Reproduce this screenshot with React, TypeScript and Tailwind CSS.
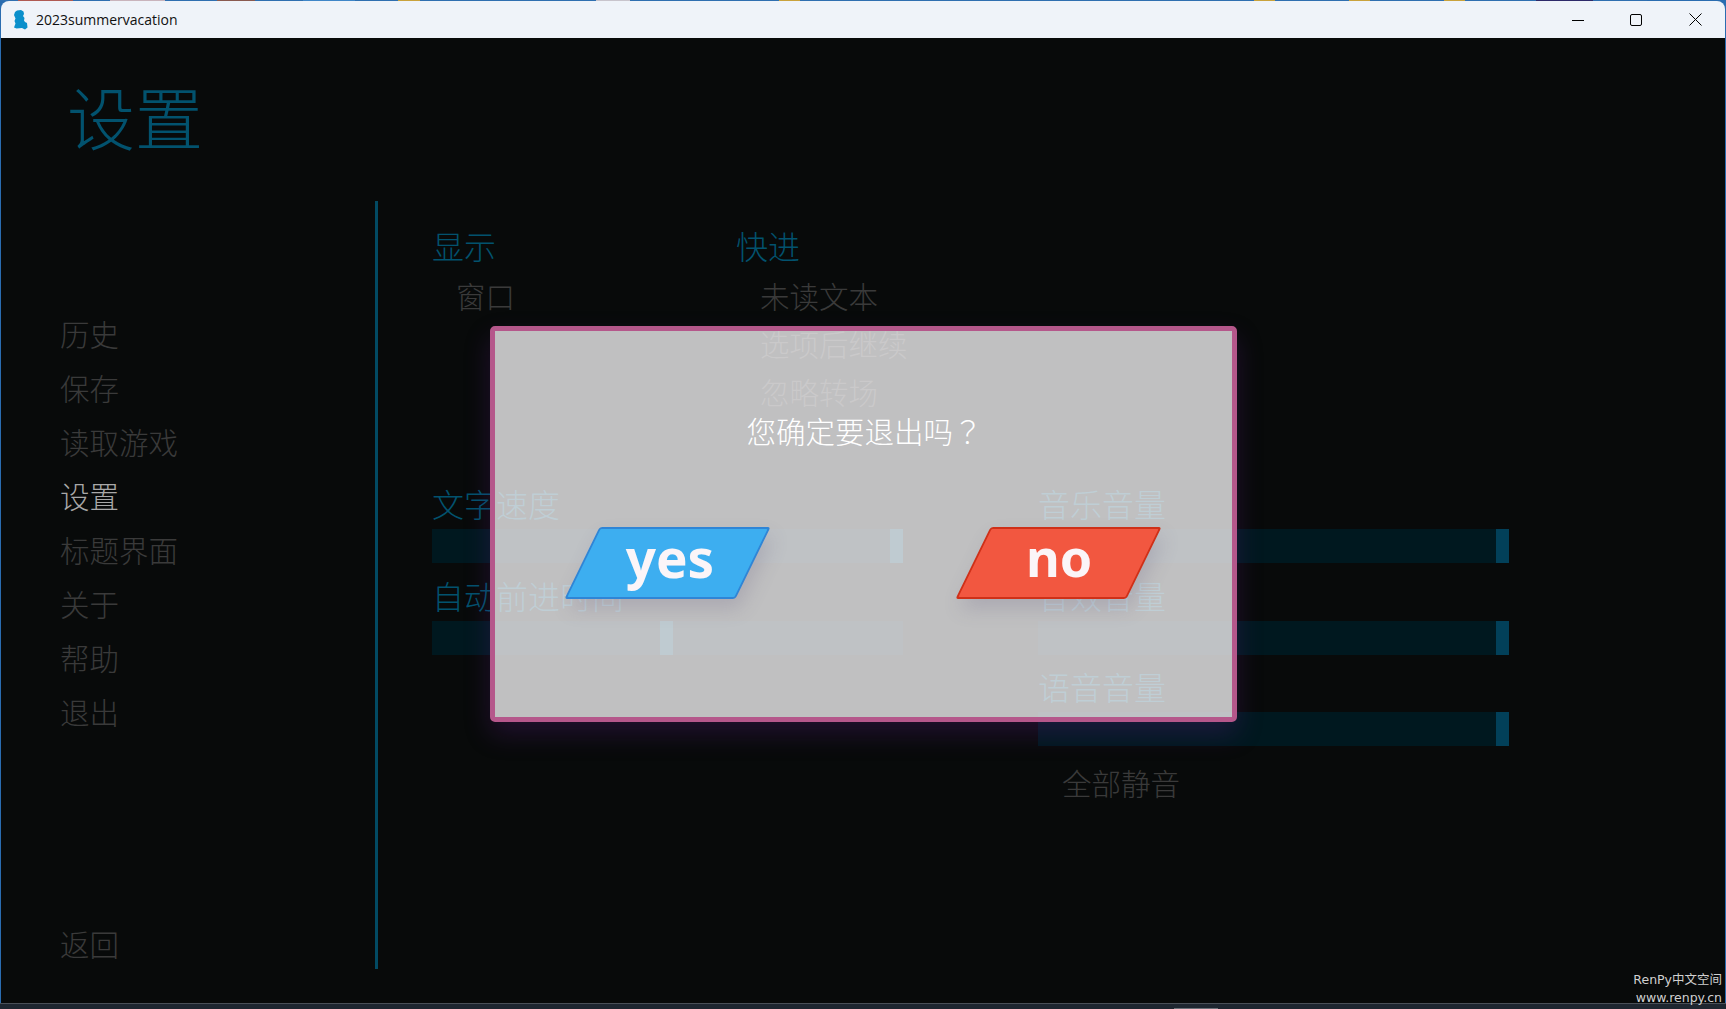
const cjk = "font-['Noto_Sans_CJK_SC','Noto_Sans',sans-serif]";

const navItems = ["历史", "保存", "读取游戏", "设置", "标题界面", "关于", "帮助", "退出"];

// wallpaper peeking out above the window
const wallpaper = [
  "w-[18px] bg-[#2f6fb0]", "w-[55px] bg-[#b05a52]", "w-[37px] bg-[#2f6fb0]", "w-[55px] bg-[#c9b4bc]",
  "w-[52px] bg-[#2f6fb0]", "w-[38px] bg-[#8a5a50]", "w-[48px] bg-[#2f6fb0]", "w-[52px] bg-[#3f86c8]",
  "w-[43px] bg-[#2f6fb0]", "w-[22px] bg-[#c9a23c]", "w-[176px] bg-[#2f6fb0]", "w-[34px] bg-[#c8c4cc]",
  "w-[149px] bg-[#2f6fb0]", "w-[21px] bg-[#c9a23c]", "w-[454px] bg-[#2f6fb0]", "w-[21px] bg-[#c9a23c]",
  "w-[74px] bg-[#2f6fb0]", "w-[21px] bg-[#c9a23c]", "w-[74px] bg-[#2f6fb0]", "w-[21px] bg-[#c9a23c]",
  "w-[71px] bg-[#2f6fb0]", "w-[57px] bg-[#2e2a6a]", "w-[54px] bg-[#2f6fb0]",
];

function Slider({ label, thumb, className = "" }: { label: string; thumb: string; className?: string }) {
  return (
    <div className={`mb-4 w-[471px] ${className}`}>
      <div className="mb-[10px] h-8 text-[32px] leading-8 text-[#02526e]">{label}</div>
      <div className="flex h-[34px] bg-[#00181f]">
        <div className={`h-full w-[13px] bg-[#024059] ${thumb}`} />
      </div>
    </div>
  );
}

function Options({ title, items }: { title: string; items: string[] }) {
  return (
    <div>
      <div className="h-8 text-[32px] leading-8 text-[#02526e]">{title}</div>
      <div className="mt-[10px] pl-6">
        {items.map((item) => (
          <div key={item} className="h-12 text-[29.5px] leading-[48px] text-[#3a3a3a]">{item}</div>
        ))}
      </div>
    </div>
  );
}

function TitleBar() {
  return (
    <div className="flex h-[37px] items-center rounded-t-lg bg-[#eff3f9] pl-[12px]">
      <svg width="15" height="20" viewBox="0 0 15 20" className="shrink-0">
        <path d="M4 0.5 L8 0 L10.5 1.5 L11 4 L10 6 L11.5 8 L11 10.5 L12 12 L14 13 L14.5 17.5 L12 19.5 L9 18 L3.5 18.5 L1 17.5 L2.5 13.5 L1.5 11 L2.5 8.5 L1 5 L2 2 Z" fill="#0a8fcb" />
      </svg>
      <span className="ml-2 font-['Open_Sans',sans-serif] text-[14px] font-normal text-[#111]">2023summervacation</span>
      <div className="ml-auto flex h-full items-center text-black">
        <svg width="12" height="12" viewBox="0 0 12 12" className="mr-[46px]">
          <path d="M0 6.5H12" stroke="currentColor" strokeWidth="1" />
        </svg>
        <svg width="12" height="12" viewBox="0 0 12 12" className="mr-[47px]">
          <rect x="0.5" y="0.5" width="11" height="11" rx="1.5" fill="none" stroke="currentColor" strokeWidth="1" />
        </svg>
        <svg width="13" height="13" viewBox="0 0 13 13" className="mr-[23px]">
          <path d="M0.5 0.5L12.5 12.5M12.5 0.5L0.5 12.5" stroke="currentColor" strokeWidth="1" />
        </svg>
      </div>
    </div>
  );
}

function QuitDialog() {
  return (
    <div className="absolute left-[489px] top-[288px] h-[396px] w-[747px] rounded-[5px] border-[5px] border-[#b5578b] bg-[rgba(239,238,239,0.8)] shadow-[0_12px_26px_rgba(90,30,130,0.3)]">
      <div className="pt-[79px] pl-[2px] text-center text-[29.5px] leading-10 text-white">
        您确定要退出吗<span className="font-['Noto_Sans_CJK_TC',sans-serif]">？</span>
      </div>
      <div className="mt-[77px] flex gap-[220px] pl-[87px]">
        <div className="flex h-[72px] w-[171px] -skew-x-[26deg] items-center justify-center rounded-[3px] border-2 border-[#2f85d6] bg-[#3daef0] pb-3 shadow-[8px_10px_18px_rgba(90,80,120,0.2)]">
          <span className="skew-x-[26deg] font-['Noto_Sans',sans-serif] text-[53px] leading-none font-bold text-[#fbf5f8]">yes</span>
        </div>
        <div className="flex h-[72px] w-[171px] -skew-x-[26deg] items-center justify-center rounded-[3px] border-2 border-[#cf3018] bg-[#f25740] pb-3 shadow-[8px_10px_18px_rgba(90,80,120,0.2)]">
          <span className="mr-[5px] skew-x-[26deg] font-['Noto_Sans',sans-serif] text-[52px] leading-none font-bold text-[#fbf5f8]">no</span>
        </div>
      </div>
    </div>
  );
}

export default function App() {
  return (
    <div className={`flex h-[1009px] w-[1726px] flex-col overflow-hidden bg-[#2a6cb0] font-light ${cjk}`}>
      <div className="flex h-px shrink-0">
        {wallpaper.map((seg, i) => (
          <div key={i} className={seg} />
        ))}
      </div>
      <div className="px-px">
        <TitleBar />
        <div className="relative h-[965px] bg-[#080a0a]">
          <div className="h-[163px] pl-[66px] pt-[44px] text-[68px] leading-none text-[#02526e]">设置</div>
          <div className="flex h-[768px]">
            <nav className="w-[374px] shrink-0 pl-[59px] pt-[105px] text-[29.5px] text-[#3a3a3a]">
              {navItems.map((item) => (
                <div key={item} className={`h-[54px] leading-[54px] ${item === "设置" ? "text-[#a8a8a8]" : ""}`}>{item}</div>
              ))}
              <div className="mt-[178px] h-[54px] leading-[54px]">返回</div>
            </nav>
            <div className="w-[3px] shrink-0 bg-[#024a63]" />
            <div className="pl-[54px] pt-7">
              <div className="flex h-[258px]">
                <div className="w-[304px]"><Options title="显示" items={["窗口"]} /></div>
                <Options title="快进" items={["未读文本", "选项后继续", "忽略转场"]} />
              </div>
              <div className="flex">
                <div className="w-[606px]">
                  <Slider label="文字速度" thumb="ml-[458px]" />
                  <Slider label="自动前进时间" thumb="ml-[228px]" />
                </div>
                <div>
                  <Slider label="音乐音量" thumb="ml-[458px]" />
                  <Slider label="音效音量" thumb="ml-[458px]" />
                  <Slider label="语音音量" thumb="ml-[458px]" className="-mt-px" />
                  <div className="mt-[3px] pl-6 text-[29.5px] leading-10 text-[#3a3a3a]">全部静音</div>
                </div>
              </div>
            </div>
          </div>
          <QuitDialog />
          <div className="absolute -bottom-1 right-[3px] text-right font-['DejaVu_Sans','Noto_Sans_CJK_SC',sans-serif] text-[12.5px] leading-[18px] font-normal text-[#d0d0d0]">
            <div>RenPy中文空间</div>
            <div>www.renpy.cn</div>
          </div>
        </div>
      </div>
      <div className="flex flex-1 items-end border-t border-[#4a5058] bg-[#1e2630]">
        <div className="ml-[1174px] h-px w-[44px] bg-[#6a7078]" />
      </div>
    </div>
  );
}
